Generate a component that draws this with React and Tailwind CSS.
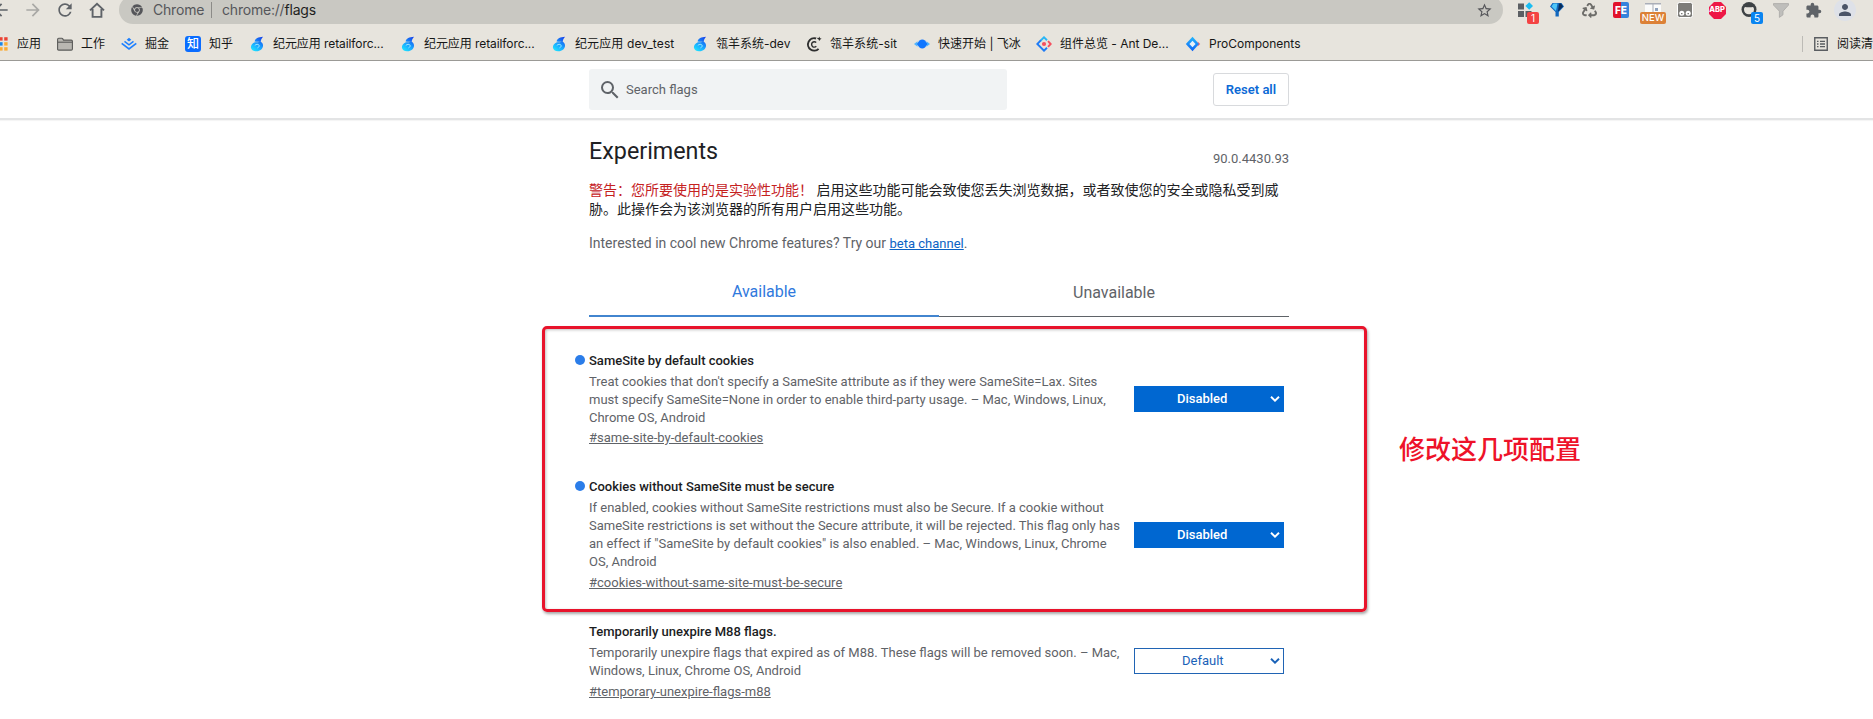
import { MdArrowBack, MdArrowForward, MdRefresh, MdStarBorder, MdExtension, MdPerson, MdSearch } from "react-icons/md";
import { FaChrome, FaRecycle } from "react-icons/fa";

function Cell({ children }) {
  return <div className="relative flex h-7 w-8 shrink-0 items-center justify-center">{children}</div>;
}

function HomeIcon() {
  return (
    <svg className="size-4" viewBox="0 0 16 16" fill="none" stroke="#5f6368" strokeWidth="1.9">
      <path d="M1 8.4 8 1.8l7 6.6M3.6 7v7.9h8.8V7" />
    </svg>
  );
}

function GridIcon() {
  const colors = ["#ea4335", "#ea4335", "#ea4335", "#34a853", "#1a86e8", "#fbab33", "#34a853", "#fbab33", "#fbab33"];
  return (
    <svg className="size-4" viewBox="0 0 16 16">
      {colors.map((c, i) => (
        <rect key={i} x={1.2 + (i % 3) * 5} y={1.2 + Math.floor(i / 3) * 5} width="3.4" height="3.4" fill={c} />
      ))}
    </svg>
  );
}

function FolderIcon() {
  return (
    <svg className="size-4" viewBox="0 0 16 16" fill="#b9b7b2" stroke="#5a5a58" strokeWidth="1.1">
      <path d="M.6 13V3.4c0-.7.4-1.1 1.1-1.1h3.1c.5 0 .8.2 1 .6l.7 1.2h7.8c.7 0 1.1.4 1.1 1.1V13c0 .7-.4 1.1-1.1 1.1H1.7C1 14.1.6 13.7.6 13z" />
      <path d="M.6 6.200h14.800" />
    </svg>
  );
}

function JuejinIcon() {
  return (
    <svg className="size-4" viewBox="0 0 16 16" fill="none" stroke="#1e80ff">
      <path d="M8 1.800l2.300 1.900L8 5.500 5.700 3.700z" fill="#1e80ff" stroke="none" />
      <path d="M3.500 5.300 8 8.800l4.500-3.500" strokeWidth="1.500" />
      <path d="M.700 7.400 8 13l7.300-5.600" strokeWidth="1.700" />
    </svg>
  );
}

function ZhihuIcon() {
  return (
    <div className="flex size-4 items-center justify-center rounded-[3px] bg-[#0a6cff] text-[12px] leading-none font-medium text-white">知</div>
  );
}

function FlameIcon() {
  return (
    <svg className="size-4" viewBox="0 0 16 16">
      <defs>
        <linearGradient id="flame" x1="0.2" y1="1" x2="0.8" y2="0">
          <stop offset="0" stopColor="#1fe4ff" />
          <stop offset=".45" stopColor="#19a5ff" />
          <stop offset="1" stopColor="#1546ea" />
        </linearGradient>
      </defs>
      <path
        d="M14 .8C9.500 1 6 2.700 5.600 5.400c2 .6 4 .4 5.300.3-1.700.4-3.600.9-5 .5C3.300 7.200 1.700 9.200 1.900 11.500c.3 2.500 2.600 4 5.600 3.800 3.600-.2 6.200-2.400 6.500-5.300.2-2-.7-3.400-2.300-4.300.3-1.800 1-3.400 2.300-4.900z"
        fill="url(#flame)"
      />
      <path d="M5.800 9.400c1.400-1.300 3.100-1.400 4-.5.8.9.3 2.200-1.300 3" fill="none" stroke="#a9efff" strokeWidth=".9" />
    </svg>
  );
}

function SitIcon() {
  return (
    <svg className="size-4" viewBox="0 0 16 16" fill="none" stroke="#2e2e2e">
      <path d="M10 2.500A6.200 6.200 0 1 0 12.600 12.800" strokeWidth="1.900" />
      <path d="M10.200 6.500a2.700 2.700 0 1 0 .1 3.800" strokeWidth="1.400" />
      <path d="M10.200 1.800 12.600 2l.8-1.500.6 1.700 1.600.3-1.500 1.200-.9 1.300-.8-1.700z" fill="#2e2e2e" stroke="none" />
    </svg>
  );
}

function IceIcon() {
  return (
    <svg className="size-4" viewBox="0 0 16 16">
      <path d="M0 8l3.500-2.700v5.400zM16 8l-3.500-2.700v5.400z" fill="#4fb4ff" />
      <path d="M2.800 8 5.500 4.400C7 3.200 9.500 3.200 11 4.400L13.500 8 11 11.600c-1.500 1.200-4 1.200-5.500 0z" fill="#0f76ff" />
    </svg>
  );
}

function AntIcon() {
  return (
    <svg className="size-4" viewBox="0 0 16 16" fill="none" strokeWidth="1.9">
      <path d="M11 4.200 8 1.300 4.200 5" stroke="#29b6f6" />
      <path d="M4.800 4.400 1.300 8 8 14.700l3-2.900" stroke="#1f7bf5" />
      <path d="M12 5.200 14.700 8 12 10.800" stroke="#f5505f" />
      <circle cx="8" cy="8" r="2.100" fill="#f5505f" />
    </svg>
  );
}

function ProIcon() {
  return (
    <svg className="size-4" viewBox="0 0 16 16">
      <defs>
        <linearGradient id="pro" x1="0" y1="0" x2="0" y2="1">
          <stop offset="0" stopColor="#25b7fb" />
          <stop offset="1" stopColor="#0f62f5" />
        </linearGradient>
      </defs>
      <path d="M12.600 5.500 15.200 8l-2.600 2.500z" fill="#f5606c" />
      <path d="M7.500.8 14 8l-6.500 7.200L.8 8z" fill="url(#pro)" />
      <path d="M7.500 4.800 10.600 8l-3.100 3.200L4.400 8z" fill="#e8f1fa" />
    </svg>
  );
}

const BOOKMARKS = [
  { icon: GridIcon, label: "应用", width: "w-6" },
  { icon: FolderIcon, label: "工作", width: "w-6" },
  { icon: JuejinIcon, label: "掘金", width: "w-6" },
  { icon: ZhihuIcon, label: "知乎", width: "w-6" },
  { icon: FlameIcon, label: "纪元应用 retailforc...", width: "w-[111px]", spacing: "tracking-[-0.08px]" },
  { icon: FlameIcon, label: "纪元应用 retailforc...", width: "w-[111px]", spacing: "tracking-[-0.08px]" },
  { icon: FlameIcon, label: "纪元应用 dev_test", width: "w-[101px]", spacing: "tracking-[0.12px]" },
  { icon: FlameIcon, label: "瓴羊系统-dev", width: "w-[74px]" },
  { icon: SitIcon, label: "瓴羊系统-sit", width: "w-[68px]", spacing: "tracking-[0.05px]" },
  { icon: IceIcon, label: "快速开始 | 飞冰", width: "w-[82px]" },
  { icon: AntIcon, label: "组件总览 - Ant De...", width: "w-[109px]", spacing: "tracking-[-0.02px]" },
  { icon: ProIcon, label: "ProComponents", width: "w-[92px]" },
];

function Toolbar() {
  return (
    <div className="-mt-1 flex h-7 shrink-0 items-center">
      <div className="-ml-[15px] flex text-[#5f6368]">
        <Cell><MdArrowBack className="size-5" /></Cell>
        <Cell><MdArrowForward className="size-5 text-[#a9a8a5]" /></Cell>
        <Cell><MdRefresh className="size-5" /></Cell>
        <Cell><HomeIcon /></Cell>
      </div>
      <div className="ml-1.5 flex h-7 w-[1384px] items-center rounded-full bg-[#c9c8c2] pr-2.5 pl-3 text-[14px] leading-5 text-[#55565a]">
        <FaChrome className="size-3" />
        <span className="-mt-px ml-2.5 w-[58px] tracking-[-0.2px]">Chrome</span>
        <span className="h-4 w-px bg-[#8c8b88]" />
        <span className="-mt-px ml-2.5 tracking-[-0.2px]">chrome://<span className="text-[#1e1f21]">flags</span></span>
        <MdStarBorder className="ml-auto size-[17px]" />
      </div>
      <div className="ml-1.5 flex text-[#5f6368]">
        <Cell>
          <svg className="size-4" viewBox="0 0 16 16">
            <path d="M1 1.500h6v6H1zM1 9h6v6H1zM8.500 9h6v6h-6z" fill="#5c5f63" />
            <path d="M12.200.2 16 4l-3.800 3.800L8.400 4z" fill="#1bbdf2" />
          </svg>
          <span className="absolute top-4 left-[18px] flex h-3 w-3 items-center justify-center rounded-[2px] bg-[#f44343] text-[10px] leading-none text-white">1</span>
        </Cell>
        <Cell>
          <svg className="size-4" viewBox="0 0 16 16">
            <path d="M3.500 1h9L15 4.500 9.800 10v4.500H6.500V10L1 4.500z" fill="#1267bd" />
            <path d="M4.500 1.500h4L7 9 2.500 4.500z" fill="#4ec6f8" />
            <path d="M10 1.500h2l2 3L9 9.500z" fill="#0a2c58" />
          </svg>
        </Cell>
        <Cell><FaRecycle className="size-[15px] text-[#6d6c69]" /></Cell>
        <Cell>
          <span className="flex size-4 items-center justify-center rounded-[2px] bg-linear-to-r from-[#e2122b] from-50% to-[#3583dc] to-50% text-[10px] leading-none font-extrabold text-white">FE</span>
        </Cell>
        <Cell>
          <svg className="size-4" viewBox="0 0 16 16">
            <path d="M0 1h16v12H0z" fill="#fbfbfb" />
            <path d="M0 1h16v1.500H0zM7.500 2h1v8h-1z" fill="#aaaeb8" />
            <path d="M10 6h3v3h-3z" fill="#8fa1bd" />
          </svg>
          <span className="absolute top-4 left-[3px] flex h-3 w-[26px] items-center justify-center rounded-[2px] bg-[#dc8137] text-[9.5px] leading-none font-medium text-white">NEW</span>
        </Cell>
        <Cell>
          <svg className="size-4" viewBox="0 0 16 16">
            <rect x=".5" y=".5" width="15" height="15" rx="2" fill="#7d7c79" stroke="#fff" />
            <circle cx="4.800" cy="11.200" r="2.500" fill="#fff" />
            <circle cx="11.200" cy="11.200" r="2.500" fill="#fff" />
            <path d="M4 11h1.500v1.200H4zM10.500 11H12v1.200h-1.500z" fill="#7d7c79" />
          </svg>
        </Cell>
        <Cell>
          <svg className="size-[17px]" viewBox="0 0 16 16">
            <path d="M4.700 0h6.600L16 4.700v6.600L11.300 16H4.700L0 11.300V4.700z" fill="#ed1846" />
          </svg>
          <span className="absolute text-[7.5px] leading-none font-extrabold text-white">ABP</span>
        </Cell>
        <Cell>
          <svg className="size-4" viewBox="0 0 16 16">
            <circle cx="8" cy="7.500" r="7.500" fill="#3e4245" />
            <path d="M3 7.500c0-1.200.4-2 1-2.600 2 .6 6 .6 8 0 .6.600 1 1.400 1 2.600 0 3.200-2 4.700-5 4.700S3 10.700 3 7.500z" fill="#e7e4dd" />
          </svg>
          <span className="absolute top-4 left-[18px] flex h-3 w-3 items-center justify-center rounded-[2px] bg-[#0a84f0] text-[10px] leading-none text-white">5</span>
        </Cell>
        <Cell>
          <svg className="h-[15px] w-4" viewBox="0 0 16 15" fill="#bfbebb" stroke="#a9a8a6" strokeWidth=".8">
            <path d="M.5.600h15v1.500L10 8.200v3.600l-3.600 2.600V8.200L.5 2.100z" />
          </svg>
        </Cell>
        <Cell><MdExtension className="size-[17px]" /></Cell>
        <Cell>
          <span className="flex size-[22px] items-center justify-center rounded-full bg-[#dee1e8]">
            <MdPerson className="size-[18px] text-[#4a5468]" />
          </span>
        </Cell>
      </div>
    </div>
  );
}

function BookmarksBar() {
  return (
    <div className="flex h-[37px] shrink-0 items-center border-b border-[#9b9a96] pt-[3px] text-[12px] text-[#161616]">
      <div className="-ml-[7px] flex gap-4">
        {BOOKMARKS.map(({ icon: Icon, label, width, spacing = "" }, i) => (
          <div key={i} className="flex items-center gap-2">
            <Icon />
            <span className={`${width} ${spacing} leading-4 whitespace-nowrap`}>{label}</span>
          </div>
        ))}
      </div>
      <div className="ml-auto flex w-[71px] items-center">
        <span className="h-4 w-px shrink-0 bg-[#bdbbb6]" />
        <svg className="ml-[11px] size-3.5 shrink-0" viewBox="0 0 14 14" fill="none" stroke="#5a5d61">
          <path d="M.750.750h12.500v12.500H.750z" strokeWidth="1.400" />
          <path d="M3 4.300h1.500M6 4.300h5M3 7h1.500M6 7h5M3 9.700h1.500M6 9.700h5" strokeWidth="1.300" />
        </svg>
        <span className="ml-[9px] shrink-0 leading-4 whitespace-nowrap">阅读清</span>
      </div>
    </div>
  );
}

function Select({ value }) {
  const active = value !== "Default";
  return (
    <button
      className={`relative flex h-[26px] w-[150px] items-center border text-[13px] ${
        active ? "border-[#0067d1] bg-[#0067d1] pl-[42px] font-medium text-white" : "border-[#2064b4] bg-white pl-[47px] text-[#1a62b8]"
      }`}
    >
      {value}
      <svg className="absolute top-[9px] right-[3px] h-1.5 w-[10px]" viewBox="0 0 10 6" fill="none" stroke="currentColor" strokeWidth="1.900">
        <path d="M1 .8 5 4.700 9 .8" />
      </svg>
    </button>
  );
}

const FLAGS = [
  {
    title: "SameSite by default cookies",
    lines: [
      "Treat cookies that don't specify a SameSite attribute as if they were SameSite=Lax. Sites",
      "must specify SameSite=None in order to enable third-party usage. – Mac, Windows, Linux,",
      "Chrome OS, Android",
    ],
    link: "#same-site-by-default-cookies",
    value: "Disabled",
    modified: true,
    box: "h-[126px]",
    select: "pt-[34px]",
    linkGap: "mt-0.5",
  },
  {
    title: "Cookies without SameSite must be secure",
    lines: [
      "If enabled, cookies without SameSite restrictions must also be Secure. If a cookie without",
      "SameSite restrictions is set without the Secure attribute, it will be rejected. This flag only has",
      "an effect if \"SameSite by default cookies\" is also enabled. – Mac, Windows, Linux, Chrome",
      "OS, Android",
    ],
    link: "#cookies-without-same-site-must-be-secure",
    value: "Disabled",
    modified: true,
    box: "h-[145px]",
    select: "pt-11",
    linkGap: "mt-[3px]",
  },
  {
    title: "Temporarily unexpire M88 flags.",
    lines: [
      "Temporarily unexpire flags that expired as of M88. These flags will be removed soon. – Mac,",
      "Windows, Linux, Chrome OS, Android",
    ],
    link: "#temporary-unexpire-flags-m88",
    value: "Default",
    modified: false,
    box: "h-[90px]",
    select: "pt-[25px]",
    linkGap: "mt-[3px]",
  },
];

function Flag({ flag }) {
  return (
    <div className={`flex shrink-0 ${flag.box}`}>
      <div className="w-[545px] text-[13px] leading-[18px] whitespace-nowrap text-[#5f6368]">
        <div className="relative font-medium text-[#1b1c1e]">
          {flag.modified && <span className="absolute top-[3px] -left-3.5 size-2.5 rounded-full bg-[#2b7de9]" />}
          {flag.title}
        </div>
        <div className="mt-[3px]">
          {flag.lines.map((line) => (
            <div key={line}>{line}</div>
          ))}
        </div>
        <a className={`block underline ${flag.linkGap}`}>{flag.link}</a>
      </div>
      <div className={flag.select}>
        <Select value={flag.value} />
      </div>
    </div>
  );
}

export default function App() {
  return (
    <div className="relative flex h-[719px] w-full flex-col overflow-hidden bg-white font-[Roboto,'Noto_Sans_CJK_SC',sans-serif]">
      <div className="flex shrink-0 flex-col bg-[#e7e4dd] font-[Inter,'Noto_Sans_CJK_SC',sans-serif]">
        <Toolbar />
        <BookmarksBar />
      </div>

      <header className="flex h-[59px] shrink-0 items-start border-b-2 border-[#e3e4e5] pl-[589px] shadow-[0_1px_1px_rgba(0,0,0,0.04)]">
        <div className="mt-2 flex h-[41px] w-[418px] items-center rounded-[3px] bg-[#f1f3f4] pl-[9px] text-[13px] text-[#5f6368]">
          <MdSearch className="size-6" />
          <span className="ml-1">Search flags</span>
        </div>
        <button className="mt-3 ml-[206px] flex h-[33px] w-[76px] items-center justify-center rounded-[3px] border border-[#d8dadd] text-[13px] font-semibold text-[#0c6ad6]">
          Reset all
        </button>
      </header>

      <main className="ml-[589px] flex w-[700px] flex-col">
        <div className="mt-[17px] flex h-7 shrink-0 items-start justify-between">
          <h1 className="text-[23.3px] leading-7 whitespace-nowrap text-[#202124]">Experiments</h1>
          <span className="mt-[13px] text-[13px] leading-[18px] text-[#5f6368]">90.0.4430.93</span>
        </div>
        <p className="mt-4 text-[14px] leading-[19px] whitespace-nowrap text-[#202124]">
          <span className="text-[#c5221f]">警告：您所要使用的是实验性功能！</span> 启用这些功能可能会致使您丢失浏览数据，或者致使您的安全或隐私受到威
          <br />
          胁。此操作会为该浏览器的所有用户启用这些功能。
        </p>
        <p className="mt-[15px] h-[18px] text-[14px] leading-[18px] whitespace-nowrap text-[#5f6368]">
          Interested in cool new Chrome features? Try our <a className="text-[13px] text-[#0b62c4] underline">beta channel</a>.
        </p>
        <div className="mt-[26px] flex h-[39px] shrink-0 text-center text-[16px] leading-5">
          <div className="w-[350px] border-b-2 border-[#4285cf] pt-1 text-[#3079dd]">Available</div>
          <div className="w-[350px] border-b border-[#5f6368] pt-[5px] text-[#5f6368]">Unavailable</div>
        </div>
        <div className="mt-[35px] flex flex-col">
          {FLAGS.map((flag) => (
            <Flag key={flag.link} flag={flag} />
          ))}
        </div>
      </main>

      <div className="absolute top-[326px] left-[542px] h-[286px] w-[825px] rounded-[5px] border-[3px] border-[#e8132b] shadow-[1px_2px_3px_rgba(0,0,0,0.35),inset_1px_1px_3px_rgba(0,0,0,0.25)]" />
      <div className="absolute top-[435px] left-[1399px] text-[26px] leading-[30px] font-medium whitespace-nowrap text-[#ee1229]">
        修改这几项配置
      </div>
    </div>
  );
}
